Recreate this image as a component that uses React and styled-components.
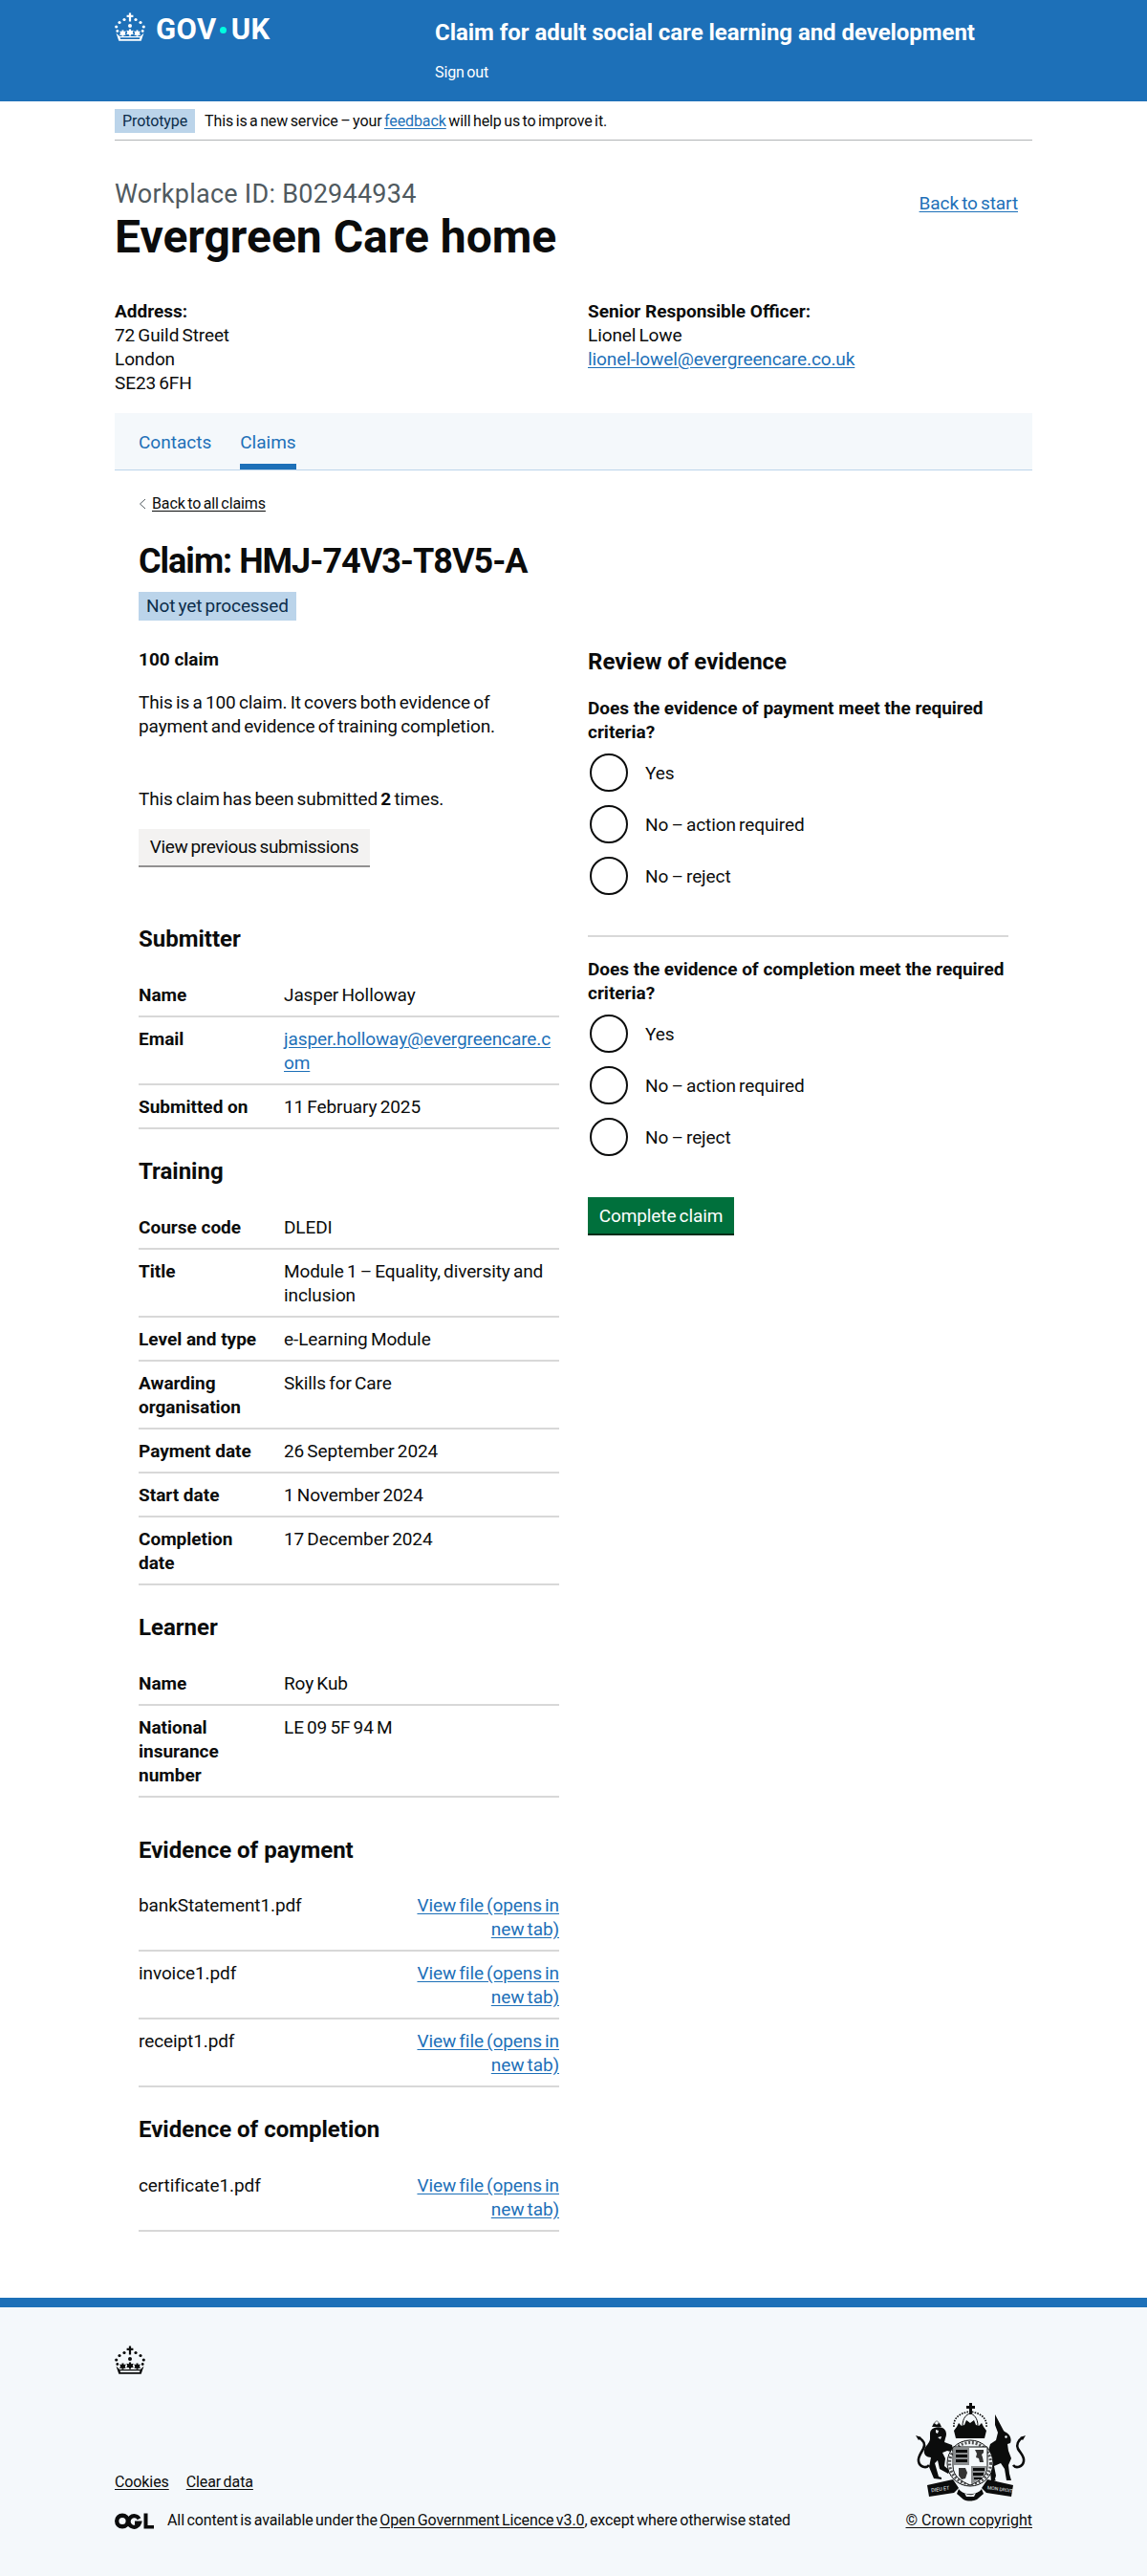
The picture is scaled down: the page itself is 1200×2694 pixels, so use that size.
import React from "react";
import styled, { createGlobalStyle } from "styled-components";

const Global = createGlobalStyle`
  html, body { margin: 0; padding: 0; background: #fff; }
  body { font-family: Roboto, "Noto Sans", Arial, sans-serif; color: #0b0c0c; font-size: 19px; line-height: 25px; word-spacing: -1.4px; letter-spacing: -0.1px; }
  * { box-sizing: border-box; }
  b, strong { word-spacing: 0; letter-spacing: 0; }
`;
const Container = styled.div`width: 960px; margin: 0 auto;`;
const Header = styled.header`background: #1d70b8; height: 106px; color: #fff;`;
const HeaderRow = styled(Container)`display: flex; padding-top: 13px;`;
const LogoWrap = styled.div`width: 335px; display: flex; align-items: flex-start; gap: 11px;`;
const LogoText = styled.span`font-size: 31px; line-height: 36px; font-weight: 700; letter-spacing: 0.4px; display: flex; align-items: center;`;
const LogoDot = styled.i`width: 7px; height: 7px; border-radius: 50%; background: #00ffe0; margin: 0 5px 0 3px; display: block;`;
const ServiceCol = styled.div`padding-top: 6px;`;
const ServiceName = styled.div`font-size: 24px; line-height: 30px; font-weight: 700; word-spacing: 0; letter-spacing: -0.05px;`;
const SignOut = styled.div`font-size: 16px; line-height: 20px; margin-top: 17px;`;
const PhaseBar = styled(Container)`display: flex; align-items: center; gap: 10px; height: 41px; padding-top: 8px; padding-bottom: 7px; border-bottom: 1px solid #b1b4b6; font-size: 16px; line-height: 20px;`;
const PhaseTag = styled.span`background: #bbd4ea; color: #0c2d4a; height: 25px; line-height: 25px; padding: 0 8px;`;
const BlueLink = styled.a`color: #1d70b8; text-decoration: underline; text-underline-offset: 2px;`;
const InkLink = styled.a`color: #0b0c0c; text-decoration: underline; text-underline-offset: 2px;`;
const Title = styled.div`display: flex; justify-content: space-between; padding-top: 41px;`;
const Caption = styled.div`font-size: 27px; line-height: 30px; color: #505a5f; word-spacing: 0; letter-spacing: 0.25px;`;
const H1 = styled.h1`font-size: 48px; line-height: 50px; font-weight: 700; margin: 5px 0 0; word-spacing: 0; letter-spacing: 0;`;
const BackStart = styled(BlueLink)`margin: 12px 15px 0 0; height: 25px;`;
const ContactGrid = styled.div`display: grid; grid-template-columns: 495px 1fr; margin-top: 40px;`;
const Bold = styled.strong`font-weight: 700; display: block;`;
const Tabs = styled.nav`margin-top: 19px; height: 60px; background: #f4f8fb; border-bottom: 1px solid #bbd4ea; display: flex; padding-left: 25px; gap: 30px;`;
const Tab = styled.a`font-size: 19px; line-height: 25px; color: #1d70b8; text-decoration: none; letter-spacing: 0; padding-top: 18px; height: 59px; border-bottom: ${p => p.$active ? "6px solid #1d70b8" : "none"};`;
const Main = styled.main`padding: 25px 25px 0; display: block;`;
const Back = styled.div`display: flex; align-items: center; gap: 6px; font-size: 16px; line-height: 20px; height: 20px;`;
const H2Big = styled.h2`font-size: 36px; line-height: 40px; font-weight: 700; margin: 30px 0 12px; word-spacing: 0; letter-spacing: -1px;`;
const StatusTag = styled.div`width: fit-content; background: #bbd4ea; color: #0c2d4a; height: 30px; line-height: 30px; padding: 0 8px;`;
const Columns = styled.div`display: grid; grid-template-columns: 440px 440px; gap: 30px; margin-top: 13px;`;
const LeftCol = styled.div``;
const RightCol = styled.div`padding-top: 15px;`;
const SubBold = styled.strong`display: block; font-weight: 700; margin-top: 15px;`;
const Para = styled.p`margin: ${p => p.$top || 20}px 0 0;`;
const GreyBtn = styled.button`display: block; margin-top: 19px; font: inherit; word-spacing: inherit; letter-spacing: -0.35px; background: #f3f2f1; color: #0b0c0c; border: 0; box-shadow: 0 2px 0 #929191; height: 38px; width: 242px; padding: 0; line-height: 38px; text-align: center;`;
const H3 = styled.h3`font-size: 24px; line-height: 30px; font-weight: 700; word-spacing: 0; letter-spacing: 0; margin: ${p => p.$top ?? 29}px 0 ${p => p.$bottom ?? 21}px;`;
const Row = styled.div`display: grid; grid-template-columns: 152px 1fr; border-bottom: 2px solid #d8d8d8; padding: 10px 0 9px;`;
const Key = styled.strong`font-weight: 700; padding-right: 20px;`;
const Val = styled.div`overflow-wrap: anywhere;`;
const FileRow = styled.div`display: flex; justify-content: space-between; border-bottom: 2px solid #d8d8d8; padding: 10px 0 9px;`;
const FileLink = styled(BlueLink)`width: 170px; text-align: right;`;
const H4 = styled.strong`display: block; font-weight: 700; margin-bottom: 8px;`;
const Fieldset = styled.div`padding-bottom: 30px;`;
const Radio = styled.label`display: flex; align-items: center; height: 44px; margin-bottom: 10px; gap: 18px;`;
const Circle = styled.span`width: 40px; height: 40px; border-radius: 50%; border: 2px solid #0b0c0c; margin-left: 2px; flex: none;`;
const Rule = styled.hr`border: 0; border-top: 2px solid #d8d8d8; margin: 0 0 21px;`;
const GreenBtn = styled.button`margin-top: 1px; font: inherit; word-spacing: inherit; letter-spacing: inherit; background: #00703c; color: #fff; border: 0; box-shadow: 0 2px 0 #002d18; height: 38px; width: 153px; padding: 0; display: block;`;
const Footer = styled.footer`margin-top: 69px; border-top: 10px solid #1d70b8; background: #f4f8fb; height: 292px;`;
const FootInner = styled(Container)`display: flex; justify-content: space-between; padding-top: 40px; font-size: 16px; line-height: 20px;`;
const FootLeft = styled.div`display: flex; flex-direction: column;`;
const FootLinks = styled.div`display: flex; gap: 18px; margin-top: 103px;`;
const Licence = styled.div`display: flex; align-items: center; gap: 14px; margin-top: 20px;`;
const FootRight = styled.div`display: flex; flex-direction: column; align-items: flex-end; word-spacing: 0; letter-spacing: 0;`;
const Crest = styled.div`margin: 60px 5px 8px 0; height: 105px;`;

const Crown = ({ color = "#fff" }) => (
  <svg width="32" height="30" viewBox="0 0 32 30" fill={color} aria-hidden="true">
    <path d="M14.9 0.5h2.2v2.3h2.3v2.2h-2.3v4.5h-2.2V5h-2.3V2.8h2.3z" />
    <circle cx="10" cy="7.5" r="1.6" /><circle cx="22" cy="7.5" r="1.6" />
    <circle cx="5" cy="10.5" r="1.6" /><circle cx="27" cy="10.5" r="1.6" />
    <circle cx="1.7" cy="15" r="1.6" /><circle cx="30.3" cy="15" r="1.6" />
    <circle cx="16" cy="14" r="2" /><circle cx="2.8" cy="19.5" r="1.4" /><circle cx="29.2" cy="19.5" r="1.4" />
    <path d="M14.9 17.5h2.2v1.8l2.6-.6-.9 2.2.9 2.1h-2.6v1.5h-2.2V23h-2.6l.9-2.1-.9-2.2 2.6.6z" />
    <path d="M7.5 18.5h2v1.5l2.3-.4-1 2.1.8 2h-2.2v1h-2l.2-1H5l1-2-.8-2.2 2.2.5zM24.5 18.5h-2v1.5l-2.3-.4 1 2.1-.8 2h2.2v1h2l-.2-1H27l-1-2 .8-2.2-2.2.5z" />
    <path d="M1.5 21.5l3.6 3.4h21.8l3.6-3.4-2.8 8.2H4.3zM5.5 26.3l.6 1.8h19.8l.6-1.8z" fillRule="evenodd" />
  </svg>
);

const OGL = () => (
  <svg width="41" height="17" viewBox="0 0 41 17" aria-hidden="true">
    <circle cx="8" cy="8.5" r="5.8" fill="none" stroke="#0b0c0c" strokeWidth="4.4" />
    <path d="M25.5 6.2A5.8 5.8 0 1 0 26 10.5h-5" fill="none" stroke="#0b0c0c" strokeWidth="4.2" />
    <path d="M30.5 0.5h4v12.5H41v3.5H30.5z" fill="#0b0c0c" />
  </svg>
);

const Arms = () => (
  <svg width="118" height="105" viewBox="0 0 118 105" aria-hidden="true">
    {/* tails */}
    <path d="M4 36c5 3 8 7 5 12-3 5-6 9-5 13 1 6 8 8 11 4" fill="none" stroke="#0b0c0c" strokeWidth="2.6" />
    <path d="M113 36c-5 3-7 8-5 12 3 5 7 8 6 13-1 6-8 8-11 4" fill="none" stroke="#0b0c0c" strokeWidth="2.6" />
    <path d="M1 34l6 2-3 3zM116 34l-6 2 3 3z" fill="#0b0c0c" />
    {/* royal crown */}
    <path d="M57 0h3v3h3v3h-3v6h-3V6h-3V3h3z" fill="#0b0c0c" />
    <path d="M41 25C40 14 50 10 58 9c8 1 18 5 17 16" fill="none" stroke="#0b0c0c" strokeWidth="1.6" strokeDasharray="1.6 1.2" />
    <path d="M50 24C50 16 54 12 58 11c4 1 8 5 8 13" fill="none" stroke="#0b0c0c" strokeWidth="1" />
    <path d="M41 29l3-4 2-4 3 3 3-1 2-5 4 3 4-3 2 5 3 1 3-3 2 4 3 4-2 8H43z" fill="#0b0c0c" />
    {/* lion */}
    <path d="M18 25l2-4 3 2 3-2 2 4z" fill="#0b0c0c" />
    <circle cx="23" cy="21" r="2" fill="none" stroke="#0b0c0c" strokeWidth="1" strokeDasharray="1 1" />
    <path d="M16 32c0-6 8-8 13-6 4 2 5 7 3 11l-1 4 8 3 2 8-7-2-5 2 3 6-1 8 6 5-2 3-9-5-2-9-3 3 2 7 2 7 3 1v2l-8-1-5-12 2-10c-5 0-8-3-7-8 1-4 5-6 6-11z" fill="#0b0c0c" />
    <path d="M22 28l3 1-1 3-2-1zM24 36l4-1-1 3z" fill="#f4f8fb" />
    {/* unicorn */}
    <path d="M84 12l9 17 1 1c5 2 8 7 6 12l-3 1 1 7 3 8-3 7 1 9 2 7h-5l-2-12-4-6-7 3 2 10-2 7h-3l-1-12 1-8-5-2 2-11 2-7 6-4 2-8-3-8z" fill="#0b0c0c" />
    <path d="M95 34l2 1-1 2-2-1z" fill="#f4f8fb" />
    <path d="M72 62l14 22" stroke="#0b0c0c" strokeWidth="1.2" strokeDasharray="2 1" fill="none" />
    {/* garter and shield */}
    <circle cx="58" cy="63" r="24" fill="#f4f8fb" stroke="#0b0c0c" strokeWidth="1" />
    <circle cx="58" cy="63" r="21.5" fill="none" stroke="#0b0c0c" strokeWidth="3.2" strokeDasharray="2 1.8" opacity="0.7" />
    <path d="M40 46h36v20c0 11-9 16-18 20-9-4-18-9-18-20z" fill="#f4f8fb" stroke="#0b0c0c" strokeWidth="1" />
    <path d="M41 47h16v18H41z" fill="#8a8d8f" />
    <path d="M59 66h16c0 9-8 15-16 19z" fill="#8a8d8f" />
    <path d="M43 49h12v3H43zM43 54h12v3H43zM43 59h12v3H43zM61 68h12v3H61zM61 73h11v3H61zM62 78h8v2h-8z" fill="#0b0c0c" />
    <path d="M63 49h9v3l-2 2 1 3 1 5h-4l-1-4-3-1 1-4z" fill="#333" />
    <path d="M46 68h7l2 5-2 6-4 1-3-4z" fill="#333" />
    {/* motto */}
    <path d="M13 86l27-6 6 9-5 5-26 4zM103 86l-27-6-6 9 5 5 26 4z" fill="#0b0c0c" />
    <text x="27" y="92" fontFamily="Roboto, sans-serif" fontSize="5.4" fill="#f4f8fb" textAnchor="middle" transform="rotate(-8 27 92)" wordSpacing="0">DIEU ET</text>
    <text x="89" y="92" fontFamily="Roboto, sans-serif" fontSize="5" fill="#f4f8fb" textAnchor="middle" transform="rotate(8 89 92)" wordSpacing="0">MON DROIT</text>
    <path d="M46 90c5 7 19 7 24 0l2 5-7 6c-4 2-10 2-14 0l-7-6z" fill="#0b0c0c" />
    <path d="M52 94c4 3 8 3 12 0l-2 4h-8z" fill="#f4f8fb" />
  </svg>
);

const rows = (list) => list.map(([k, v]) => (
  <Row key={k}><Key>{k}</Key><Val>{v}</Val></Row>
));
const files = (list) => list.map((f) => (
  <FileRow key={f}><span>{f}</span><FileLink href="#">View file (opens in new tab)</FileLink></FileRow>
));
const Question = ({ text }) => (
  <Fieldset>
    <H4>{text}</H4>
    {["Yes", "No – action required", "No – reject"].map((o) => (
      <Radio key={o}><Circle />{o}</Radio>
    ))}
  </Fieldset>
);

export default function App() {
  return (
    <>
      <Global />
      <Header>
        <HeaderRow>
          <LogoWrap><Crown /><LogoText>GOV<LogoDot />UK</LogoText></LogoWrap>
          <ServiceCol>
            <ServiceName>Claim for adult social care learning and development</ServiceName>
            <SignOut>Sign out</SignOut>
          </ServiceCol>
        </HeaderRow>
      </Header>
      <PhaseBar>
        <PhaseTag>Prototype</PhaseTag>
        <span>This is a new service – your <BlueLink href="#">feedback</BlueLink> will help us to improve it.</span>
      </PhaseBar>
      <Container>
        <Title>
          <div>
            <Caption>Workplace ID: B02944934</Caption>
            <H1>Evergreen Care home</H1>
          </div>
          <BackStart href="#">Back to start</BackStart>
        </Title>
        <ContactGrid>
          <div><Bold>Address:</Bold>72 Guild Street<br />London<br />SE23 6FH</div>
          <div><Bold>Senior Responsible Officer:</Bold>Lionel Lowe<br /><BlueLink href="#">lionel-lowel@evergreencare.co.uk</BlueLink></div>
        </ContactGrid>
        <Tabs>
          <Tab href="#">Contacts</Tab>
          <Tab href="#" $active>Claims</Tab>
        </Tabs>
        <Main>
          <Back>
            <svg width="8" height="12" viewBox="0 0 8 12" aria-hidden="true"><path d="M7 1L1.5 6 7 11" fill="none" stroke="#505a5f" strokeWidth="1" /></svg>
            <InkLink href="#">Back to all claims</InkLink>
          </Back>
          <H2Big>Claim: HMJ-74V3-T8V5-A</H2Big>
          <StatusTag>Not yet processed</StatusTag>
          <Columns>
            <LeftCol>
              <SubBold>100 claim</SubBold>
              <Para>This is a 100 claim. It covers both evidence of payment and evidence of training completion.</Para>
              <Para $top={51}>This claim has been submitted <b>2</b> times.</Para>
              <GreyBtn>View previous submissions</GreyBtn>
              <H3 $top={62}>Submitter</H3>
              {rows([["Name", "Jasper Holloway"], ["Email", <BlueLink href="#" key="e">jasper.holloway@evergreencare.com</BlueLink>], ["Submitted on", "11 February 2025"]])}
              <H3>Training</H3>
              {rows([["Course code", "DLEDI"], ["Title", "Module 1 – Equality, diversity and inclusion"], ["Level and type", "e-Learning Module"], ["Awarding organisation", "Skills for Care"], ["Payment date", "26 September 2024"], ["Start date", "1 November 2024"], ["Completion date", "17 December 2024"]])}
              <H3>Learner</H3>
              {rows([["Name", "Roy Kub"], ["National insurance number", "LE 09 5F 94 M"]])}
              <H3 $top={40} $bottom={20}>Evidence of payment</H3>
              {files(["bankStatement1.pdf", "invoice1.pdf", "receipt1.pdf"])}
              <H3>Evidence of completion</H3>
              {files(["certificate1.pdf"])}
            </LeftCol>
            <RightCol>
              <H3 $top={0} $bottom={21}>Review of evidence</H3>
              <Question text="Does the evidence of payment meet the required criteria?" />
              <Rule />
              <Question text="Does the evidence of completion meet the required criteria?" />
              <GreenBtn>Complete claim</GreenBtn>
            </RightCol>
          </Columns>
        </Main>
      </Container>
      <Footer>
        <FootInner>
          <FootLeft>
            <Crown color="#0b0c0c" />
            <FootLinks><InkLink href="#">Cookies</InkLink><InkLink href="#">Clear data</InkLink></FootLinks>
            <Licence><OGL /><span>All content is available under the <InkLink href="#">Open Government Licence v3.0</InkLink>, except where otherwise stated</span></Licence>
          </FootLeft>
          <FootRight>
            <Crest><Arms /></Crest>
            <InkLink href="#">© Crown copyright</InkLink>
          </FootRight>
        </FootInner>
      </Footer>
    </>
  );
}
